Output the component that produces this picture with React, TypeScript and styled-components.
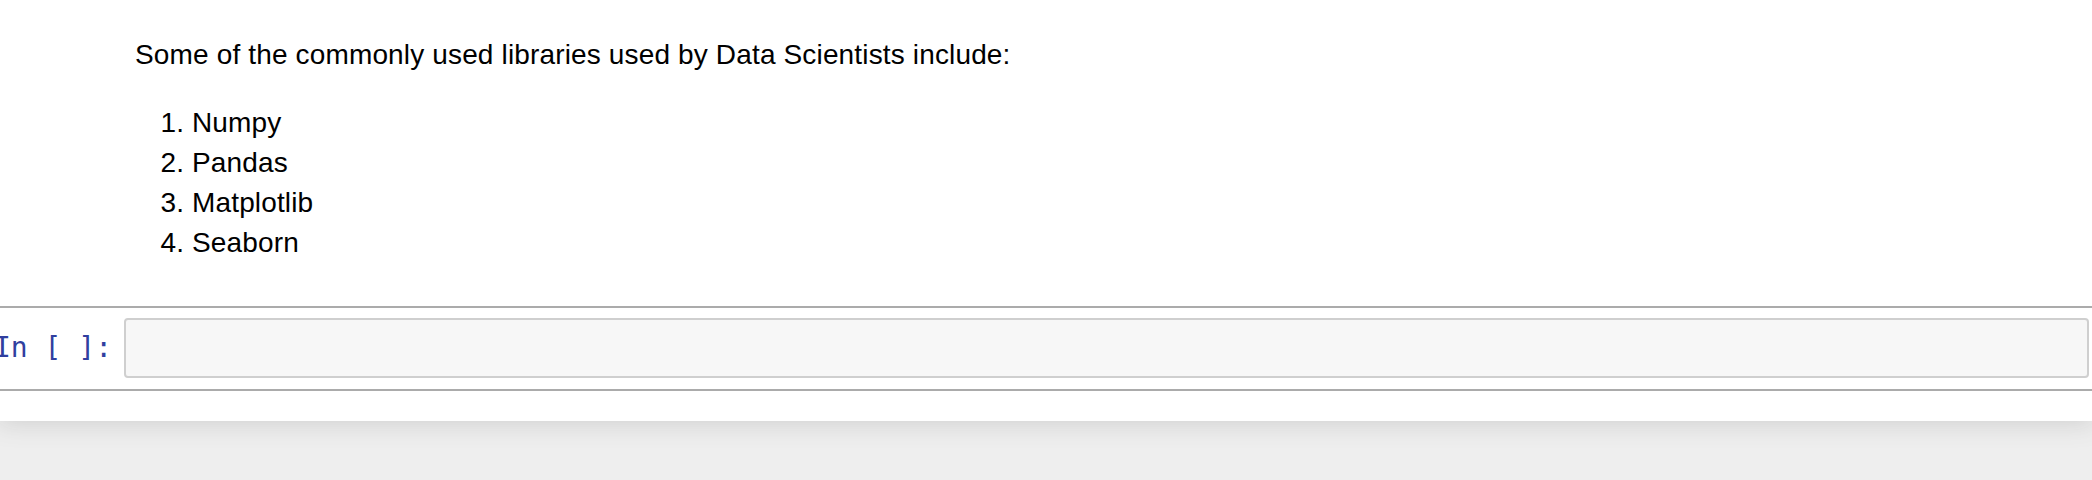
import React from "react";
import styled, { createGlobalStyle } from "styled-components";

const Global = createGlobalStyle`
  html, body {
    margin: 0;
    padding: 0;
    background: #eeeeee;
    overflow: hidden;
  }
  body {
    font-family: "Liberation Sans", Arial, sans-serif;
    color: #000;
  }
`;

const Page = styled.div`
  width: 2092px;
  height: 480px;
  background: #eeeeee;
  overflow: hidden;
`;

const NotebookContainer = styled.div`
  background: #ffffff;
  box-shadow: 0 0 24px 2px rgba(87, 87, 87, 0.2);
  padding-bottom: 30px;
`;

const MarkdownCell = styled.div`
  padding: 35px 0 0 135px;
  font-size: 28px;
  line-height: 40px;
  letter-spacing: 0.15px;
`;

const Paragraph = styled.p`
  margin: 0 0 28px 0;
`;

const List = styled.ol`
  margin: 0;
  padding-left: 57px;
`;

const Item = styled.li`
  line-height: 40px;
`;

const CodeCell = styled.div`
  margin-top: 43px;
  border-top: 2px solid #ababab;
  border-bottom: 2px solid #ababab;
  padding: 10px 3px 11px 0;
  display: flex;
  align-items: flex-start;
`;

const Prompt = styled.div`
  width: 124px;
  flex: none;
  box-sizing: border-box;
  padding-right: 12px;
  display: flex;
  justify-content: flex-end;
  overflow: hidden;
  white-space: pre;
  font-family: "DejaVu Sans Mono", "Liberation Mono", monospace;
  font-size: 28px;
  line-height: 60px;
  color: #303f9f;
`;

const InputArea = styled.div`
  flex: 1;
  height: 60px;
  box-sizing: border-box;
  background: #f7f7f7;
  border: 2px solid #cfcfcf;
  border-radius: 4px;
`;

const libraries = ["Numpy", "Pandas", "Matplotlib", "Seaborn"];

export default function App() {
  return (
    <Page>
      <Global />
      <NotebookContainer>
        <MarkdownCell>
          <Paragraph>
            Some of the commonly used libraries used by Data Scientists include:
          </Paragraph>
          <List>
            {libraries.map((lib) => (
              <Item key={lib}>{lib}</Item>
            ))}
          </List>
        </MarkdownCell>
        <CodeCell>
          <Prompt>
            <span>In [ ]:</span>
          </Prompt>
          <InputArea />
        </CodeCell>
      </NotebookContainer>
    </Page>
  );
}
